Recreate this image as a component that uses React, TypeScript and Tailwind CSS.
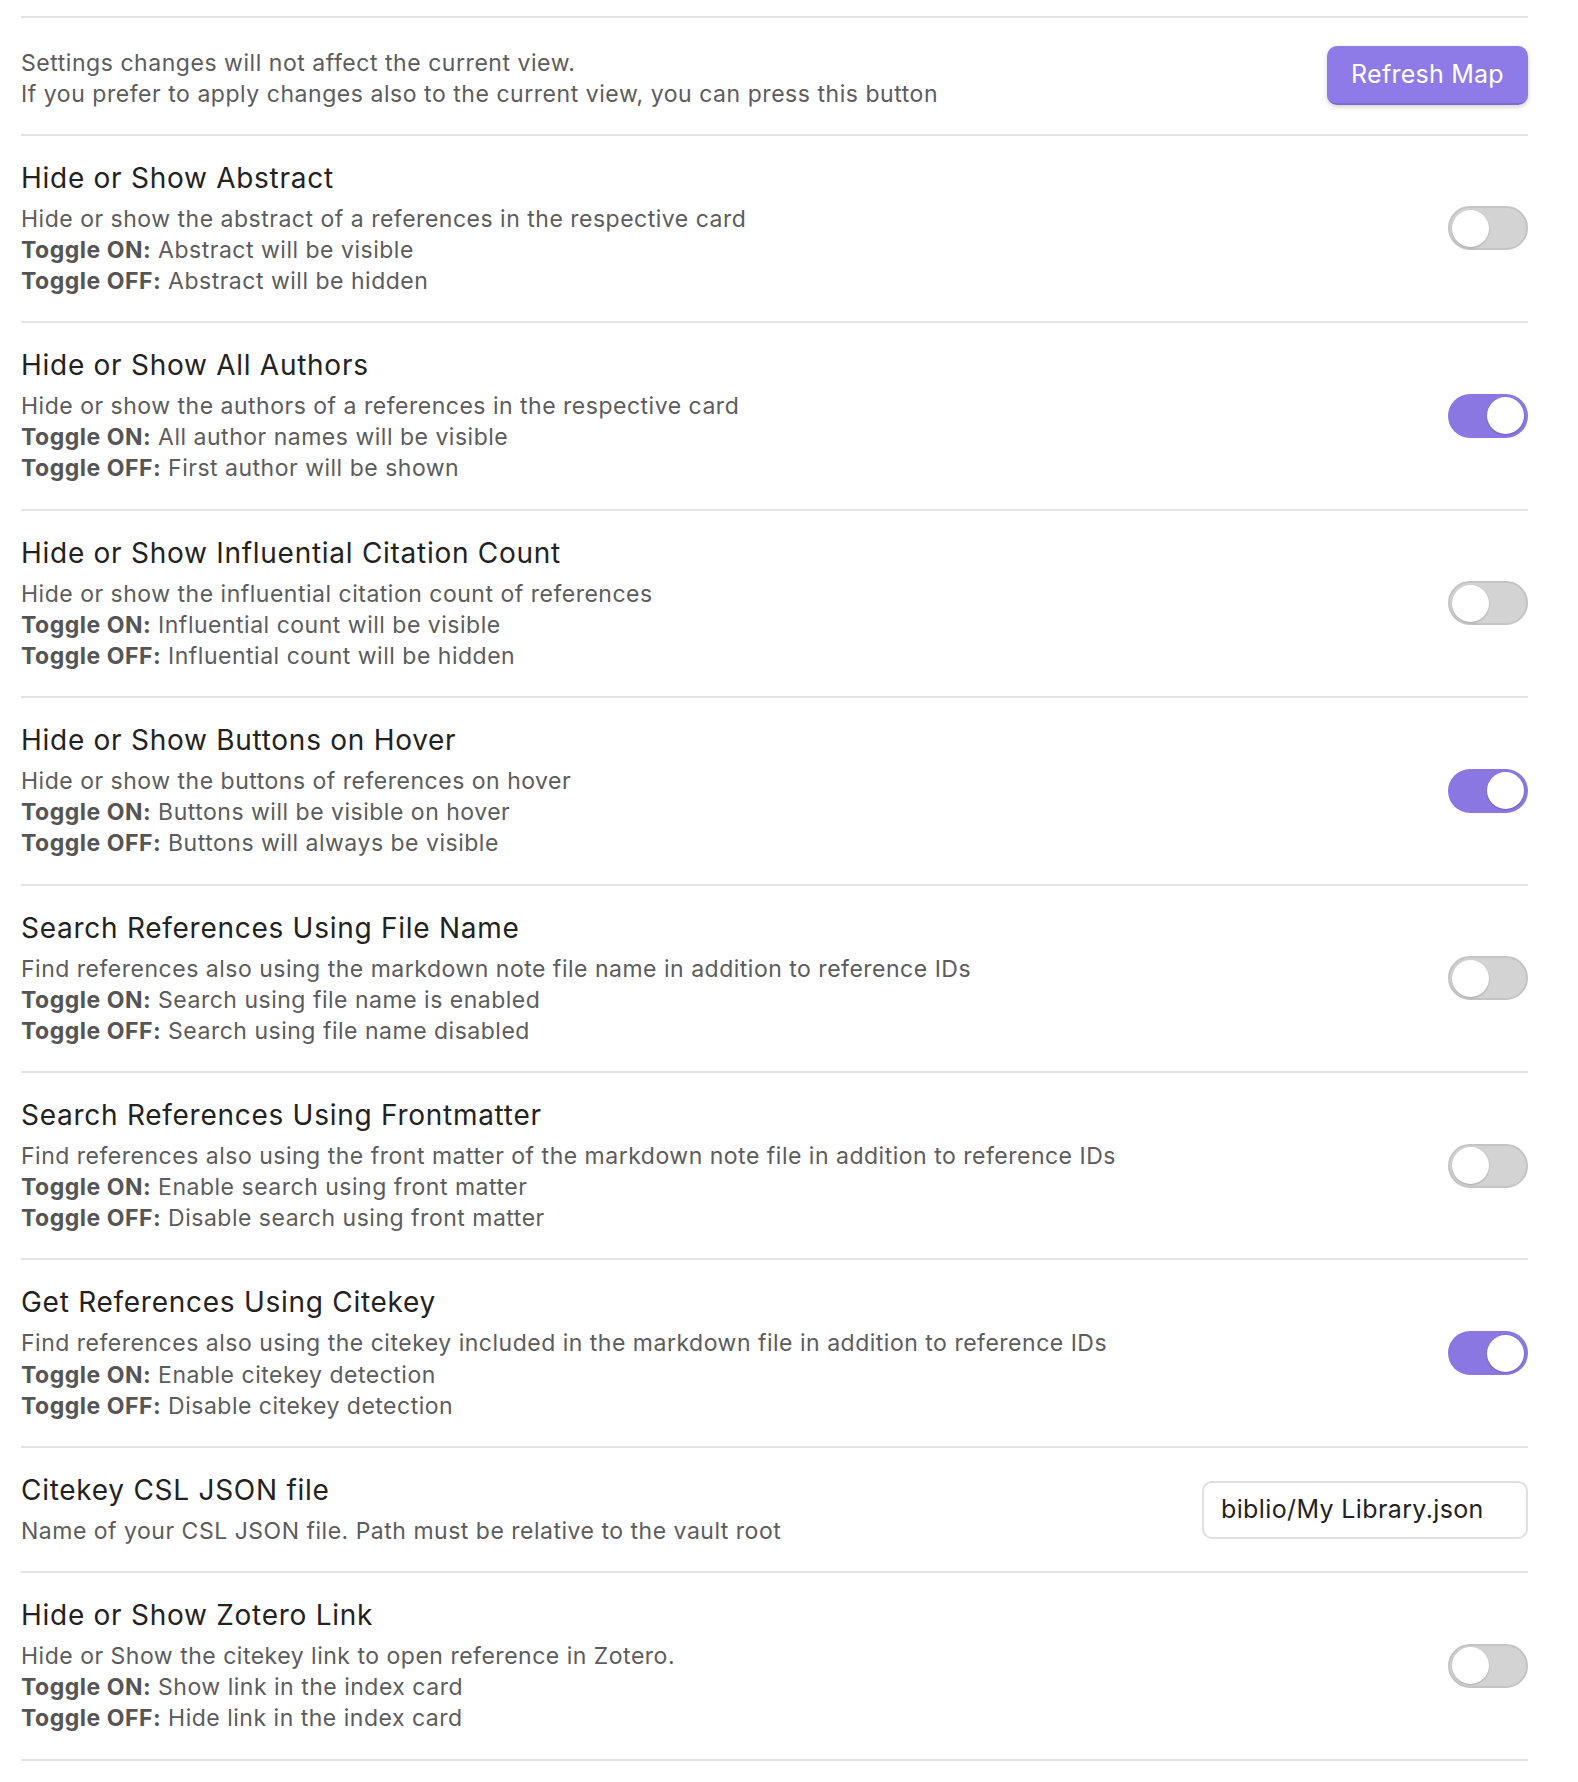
const rows = [
  {
    title: "Hide or Show Abstract",
    desc: "Hide or show the abstract of a references in the respective card",
    on: "Abstract will be visible",
    off: "Abstract will be hidden",
    checked: false,
  },
  {
    title: "Hide or Show All Authors",
    desc: "Hide or show the authors of a references in the respective card",
    on: "All author names will be visible",
    off: "First author will be shown",
    checked: true,
  },
  {
    title: "Hide or Show Influential Citation Count",
    desc: "Hide or show the influential citation count of references",
    on: "Influential count will be visible",
    off: "Influential count will be hidden",
    checked: false,
  },
  {
    title: "Hide or Show Buttons on Hover",
    desc: "Hide or show the buttons of references on hover",
    on: "Buttons will be visible on hover",
    off: "Buttons will always be visible",
    checked: true,
  },
  {
    title: "Search References Using File Name",
    desc: "Find references also using the markdown note file name in addition to reference IDs",
    on: "Search using file name is enabled",
    off: "Search using file name disabled",
    checked: false,
  },
  {
    title: "Search References Using Frontmatter",
    desc: "Find references also using the front matter of the markdown note file in addition to reference IDs",
    on: "Enable search using front matter",
    off: "Disable search using front matter",
    checked: false,
  },
  {
    title: "Get References Using Citekey",
    desc: "Find references also using the citekey included in the markdown file in addition to reference IDs",
    on: "Enable citekey detection",
    off: "Disable citekey detection",
    checked: true,
  },
];

const zotero = {
  title: "Hide or Show Zotero Link",
  desc: "Hide or Show the citekey link to open reference in Zotero.",
  on: "Show link in the index card",
  off: "Hide link in the index card",
  checked: false,
};

function Toggle({ checked }: { checked: boolean }) {
  return (
    <div
      className={
        checked
          ? "w-[80px] h-[44px] rounded-full bg-[#8a77e2] flex items-center justify-end px-[4px] shrink-0"
          : "w-[80px] h-[44px] rounded-full bg-[#d3d3d3] border-2 border-[#c4c4c4] flex items-center justify-start px-[2px] shrink-0"
      }
    >
      <div className="w-[37px] h-[37px] rounded-full bg-white shadow-[0_1px_2px_rgba(0,0,0,0.2)]" />
    </div>
  );
}

type Row = (typeof rows)[number];

function ToggleRow({ row }: { row: Row }) {
  return (
    <div className="flex items-center justify-between border-t-2 border-[#e3e3e3] pt-[24px] pb-[24px]">
      <div>
        <div className="text-[28px] leading-[36px] tracking-[0.026em] text-[#222222]">{row.title}</div>
        <div className="mt-[8px] text-[23px] leading-[31.15px] tracking-[0.022em] text-[#5c5c5c]">
          <div>{row.desc}</div>
          <div>
            <span className="font-bold text-[#555555]">Toggle ON:</span> {row.on}
          </div>
          <div>
            <span className="font-bold text-[#555555]">Toggle OFF:</span> {row.off}
          </div>
        </div>
      </div>
      <Toggle checked={row.checked} />
    </div>
  );
}

export default function App() {
  return (
    <div className="min-h-[1782px] w-[1578px] bg-white pt-[16px] pl-[21px] pr-[50px] font-['Inter','Noto_Sans',sans-serif] antialiased">
      <div className="border-b-2 border-[#e3e3e3]">
        <div className="flex items-center justify-between border-t-2 border-[#e3e3e3] pt-[30px] pb-[23px]">
          <div className="text-[23px] leading-[31.33px] tracking-[0.0235em] text-[#5c5c5c]">
            <div>Settings changes will not affect the current view.</div>
            <div>If you prefer to apply changes also to the current view, you can press this button</div>
          </div>
          <button className="w-[201px] h-[59px] -mt-[8px] rounded-[10px] bg-[#8f7be8] border-b-2 border-[#7d69d6] text-white text-[25px] tracking-[0.01em] shadow-[0_2px_5px_rgba(0,0,0,0.18)]">
            Refresh Map
          </button>
        </div>

        {rows.map((row) => (
          <ToggleRow key={row.title} row={row} />
        ))}

        <div className="flex items-center justify-between border-t-2 border-[#e3e3e3] pt-[24px] pb-[24px]">
          <div>
            <div className="text-[28px] leading-[36px] tracking-[0.026em] text-[#222222]">Citekey CSL JSON file</div>
            <div className="mt-[8px] text-[23px] leading-[31.15px] tracking-[0.022em] text-[#5c5c5c]">
              Name of your CSL JSON file. Path must be relative to the vault root
            </div>
          </div>
          <div className="w-[326px] h-[58px] rounded-[10px] border-2 border-[#e0e0e0] flex items-center px-[17px] text-[25px] tracking-[0.015em] text-[#222222]">
            biblio/My Library.json
          </div>
        </div>

        <ToggleRow row={zotero} />
      </div>
    </div>
  );
}
